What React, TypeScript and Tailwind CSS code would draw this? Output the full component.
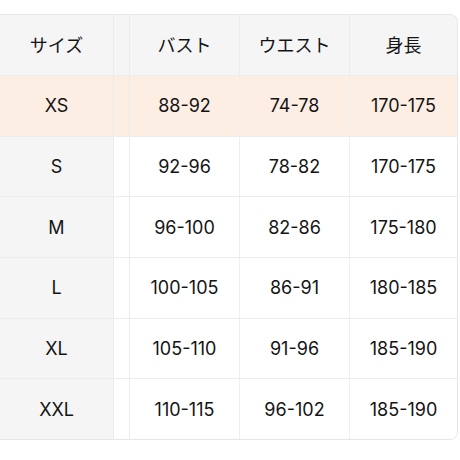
const headers = ['バスト', 'ウエスト', '身長']

const rows = [
  { size: 'XS', values: ['88-92', '74-78', '170-175'], highlight: true },
  { size: 'S', values: ['92-96', '78-82', '170-175'] },
  { size: 'M', values: ['96-100', '82-86', '175-180'] },
  { size: 'L', values: ['100-105', '86-91', '180-185'] },
  { size: 'XL', values: ['105-110', '91-96', '185-190'] },
  { size: 'XXL', values: ['110-115', '96-102', '185-190'] },
]

export default function App() {
  return (
    <div
      className="w-[460px] h-[460px] bg-white pt-[14px] pr-[2px] overflow-hidden text-[#141414]"
      style={{ fontFamily: 'Inter, "Noto Sans CJK JP", sans-serif' }}
    >
      <div className="border-y border-r border-[#e6e6e6] rounded-r-[8px] overflow-hidden">
        <div className="grid grid-cols-[114px_16px_110px_110px_1fr] h-[60px] bg-[#f5f5f6] text-[18px]">
          <div className="flex items-center justify-center border-r border-[#ebebeb]">サイズ</div>
          <div className="border-r border-[#ebebeb]" />
          {headers.map((h, i) => (
            <div
              key={h}
              className={`flex items-center justify-center ${i < 2 ? 'border-r border-[#ebebeb]' : ''}`}
            >
              {h}
            </div>
          ))}
        </div>
        {rows.map((row) => (
          <div
            key={row.size}
            className={`grid grid-cols-[114px_16px_110px_110px_1fr] h-[60.7px] border-t border-[#ececec] text-[18px] ${
              row.highlight ? 'bg-[#fdeee4]' : 'bg-white'
            }`}
          >
            <div
              className={`flex items-center justify-center border-r border-[#ebebeb] ${
                row.highlight ? '' : 'bg-[#f5f5f5]'
              }`}
            >
              {row.size}
            </div>
            <div className="border-r border-[#ebebeb]" />
            {row.values.map((v, i) => (
              <div
                key={i}
                className={`flex items-center justify-center ${i < 2 ? 'border-r border-[#efefef]' : ''}`}
              >
                {v}
              </div>
            ))}
          </div>
        ))}
      </div>
    </div>
  )
}
